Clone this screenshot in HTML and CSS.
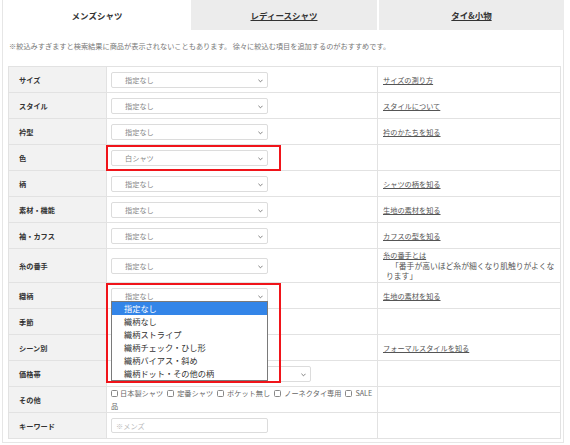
FILE: index.html
```html
<!DOCTYPE html>
<html lang="ja">
<head>
<meta charset="utf-8">
<link rel="stylesheet" href="styles.css">
</head>
<body>
<div class="wrap">
  <div class="tabs">
    <div class="tab active">メンズシャツ</div>
    <div class="tab"><a>レディースシャツ</a></div>
    <div class="tab last"><a>タイ&amp;小物</a></div>
  </div>
  <div class="panel">
    <p class="note">※絞込みすぎますと検索結果に商品が表示されないこともあります。 徐々に絞込む項目を追加するのがおすすめです。</p>
    <table class="search">
      <tr>
        <th>サイズ</th>
        <td class="sel"><div class="cell"><div class="select">指定なし<svg class="chev" viewBox="0 0 6 4"><polyline points="0.5,0.5 3,3 5.5,0.5"/></svg></div></div></td>
        <td class="link"><a>サイズの測り方</a></td>
      </tr>
      <tr>
        <th>スタイル</th>
        <td class="sel"><div class="cell"><div class="select">指定なし<svg class="chev" viewBox="0 0 6 4"><polyline points="0.5,0.5 3,3 5.5,0.5"/></svg></div></div></td>
        <td class="link"><a>スタイルについて</a></td>
      </tr>
      <tr>
        <th>衿型</th>
        <td class="sel"><div class="cell"><div class="select">指定なし<svg class="chev" viewBox="0 0 6 4"><polyline points="0.5,0.5 3,3 5.5,0.5"/></svg></div></div></td>
        <td class="link"><a>衿のかたちを知る</a></td>
      </tr>
      <tr>
        <th>色</th>
        <td class="sel"><div class="cell"><div class="select">白シャツ<svg class="chev" viewBox="0 0 6 4"><polyline points="0.5,0.5 3,3 5.5,0.5"/></svg></div><div class="mark mark-one"></div></div></td>
        <td class="link"></td>
      </tr>
      <tr>
        <th>柄</th>
        <td class="sel"><div class="cell"><div class="select">指定なし<svg class="chev" viewBox="0 0 6 4"><polyline points="0.5,0.5 3,3 5.5,0.5"/></svg></div></div></td>
        <td class="link"><a>シャツの柄を知る</a></td>
      </tr>
      <tr>
        <th>素材・機能</th>
        <td class="sel"><div class="cell"><div class="select">指定なし<svg class="chev" viewBox="0 0 6 4"><polyline points="0.5,0.5 3,3 5.5,0.5"/></svg></div></div></td>
        <td class="link"><a>生地の素材を知る</a></td>
      </tr>
      <tr>
        <th>袖・カフス</th>
        <td class="sel"><div class="cell"><div class="select">指定なし<svg class="chev" viewBox="0 0 6 4"><polyline points="0.5,0.5 3,3 5.5,0.5"/></svg></div></div></td>
        <td class="link"><a>カフスの型を知る</a></td>
      </tr>
      <tr class="tall">
        <th>糸の番手</th>
        <td class="sel"><div class="cell"><div class="select">指定なし<svg class="chev" viewBox="0 0 6 4"><polyline points="0.5,0.5 3,3 5.5,0.5"/></svg></div></div></td>
        <td class="link multi"><a class="head">糸の番手とは</a><span class="explain">「番手が高いほど糸が細くなり肌触りがよくな</span><span class="explain tail">ります」</span></td>
      </tr>
      <tr>
        <th>織柄</th>
        <td class="sel"><div class="cell">
          <div class="drop">
            <div class="select">指定なし<svg class="chev" viewBox="0 0 6 4"><polyline points="0.5,0.5 3,3 5.5,0.5"/></svg></div>
            <ul class="options">
              <li class="hl">指定なし</li>
              <li>織柄なし</li>
              <li>織柄ストライプ</li>
              <li>織柄チェック・ひし形</li>
              <li>織柄バイアス・斜め</li>
              <li>織柄ドット・その他の柄</li>
            </ul>
          </div>
          <div class="mark mark-two"></div>
        </div></td>
        <td class="link"><a>生地の素材を知る</a></td>
      </tr>
      <tr>
        <th>季節</th>
        <td class="sel"><div class="cell"><div class="select">指定なし<svg class="chev" viewBox="0 0 6 4"><polyline points="0.5,0.5 3,3 5.5,0.5"/></svg></div></div></td>
        <td class="link"></td>
      </tr>
      <tr>
        <th>シーン別</th>
        <td class="sel"><div class="cell"><div class="select">指定なし<svg class="chev" viewBox="0 0 6 4"><polyline points="0.5,0.5 3,3 5.5,0.5"/></svg></div></div></td>
        <td class="link"><a>フォーマルスタイルを知る</a></td>
      </tr>
      <tr>
        <th>価格帯</th>
        <td class="sel"><div class="cell"><div class="select wide">指定なし<svg class="chev" viewBox="0 0 6 4"><polyline points="0.5,0.5 3,3 5.5,0.5"/></svg></div></div></td>
        <td class="link"></td>
      </tr>
      <tr>
        <th>その他</th>
        <td class="sel"><div class="cell checks">
          <div class="line"><span class="cb first"></span>日本製シャツ<span class="cb"></span>定番シャツ<span class="cb"></span>ポケット無し<span class="cb"></span>ノーネクタイ専用<span class="cb"></span>SALE</div>
          <div class="line">品</div>
        </div></td>
        <td class="link"></td>
      </tr>
      <tr>
        <th>キーワード</th>
        <td class="sel"><div class="cell"><div class="input">※メンズ</div></div></td>
        <td class="link"></td>
      </tr>
    </table>
  </div>
</div>
</body>
</html>
```
FILE: styles.css
```css
* { box-sizing: border-box; }
html, body { margin: 0; padding: 0; background: #fff; }
body {
  font-family: "Noto Sans CJK JP", "Noto Sans", sans-serif;
  color: #333;
  width: 570px;
  height: 445px;
  overflow: hidden;
}
.wrap {
  margin-left: 2px;
  width: 562px;
}
.tabs {
  display: flex;
  height: 30px;
}
.tab {
  display: flex;
  align-items: center;
  justify-content: center;
  height: 30px;
  font-size: 8.5px;
  font-weight: bold;
  color: #333;
  background: #ececec;
  width: 186px;
}
.tab a { text-decoration: underline; color: #333; }
.tab.active {
  background: #fff;
  border-left: 1px solid #e6e6e6;
  width: 189px;
}
.tab.last { margin-left: 2px; width: 185px; }
.panel {
  border: 1px solid #e6e6e6;
  border-top: none;
  padding: 0 2px 3px 5px;
}
.note {
  margin: 0;
  padding: 10px 0 0 1px;
  height: 36px;
  font-size: 7.2px;
  line-height: 12px;
  color: #777;
}
.search {
  border-collapse: collapse;
  width: 553px;
  table-layout: fixed;
  border: 1px solid #dedede;
}
.search th, .search td {
  border: 1px solid #e2e2e2;
  height: 26px;
  padding: 0;
  vertical-align: middle;
}
.search th {
  width: 98px;
  background: #f2f2f2;
  text-align: left;
  padding-left: 10px;
  font-size: 7.2px;
  font-weight: bold;
  color: #333;
}
.search td.sel { width: 271px; }
.search tr.tall th, .search tr.tall td { height: 34px; }
.cell {
  position: relative;
  display: flex;
  align-items: center;
  padding: 0 4px;
  height: 24px;
}
.select {
  position: relative;
  display: flex;
  align-items: center;
  width: 157px;
  height: 16px;
  padding-left: 13px;
  border: 1px solid #dcdcdc;
  border-radius: 2px;
  background: #fff;
  font-size: 7.2px;
  color: #888;
}
.select.wide { width: 200px; }
.chev {
  position: absolute;
  right: 4px;
  top: 6px;
  width: 5px;
  height: 4px;
  fill: none;
  stroke: #666;
  stroke-width: 1;
}
.drop { position: relative; }
.options {
  position: absolute;
  z-index: 10;
  left: 0;
  top: 13px;
  width: 157px;
  margin: 0;
  padding: 0;
  list-style: none;
  background: #fff;
  border: 1px solid #7a7a7a;
}
.options li {
  height: 13.1px;
  line-height: 13.1px;
  padding-left: 12px;
  font-size: 8.2px;
  color: #333;
  white-space: nowrap;
}
.options li.hl {
  background: #3385e8;
  color: #fff;
}
.mark {
  position: absolute;
  z-index: 11;
  left: -1px;
  top: -1px;
  width: 175px;
  border: 2px solid #f0141a;
  pointer-events: none;
}
.mark-one { height: 26px; }
.mark-two { height: 100px; }
.checks {
  flex-direction: column;
  align-items: flex-start;
  justify-content: center;
  font-size: 7.2px;
  line-height: 13px;
  color: #666;
}
.checks .line { white-space: nowrap; }
.cb {
  display: inline-block;
  width: 7px;
  height: 7px;
  border: 1px solid #888;
  border-radius: 1.5px;
  vertical-align: -1px;
  margin: 0 3px 0 4px;
}
.cb.first { margin-left: 0; margin-right: 2px; }
.input {
  display: flex;
  align-items: center;
  width: 157px;
  height: 15px;
  padding-left: 4px;
  border: 1px solid #dcdcdc;
  border-radius: 2px;
  font-size: 7.2px;
  color: #bbb;
}
.search td.link {
  padding: 0 3px 0 5px;
  font-size: 7.2px;
  color: #555;
}
.link a { color: #555; text-decoration: underline; }
.link.multi { line-height: 10.5px; }
.link .head { display: block; }
.explain {
  display: block;
  height: 10px;
  line-height: 10px;
  padding-left: 8px;
  font-size: 7.8px;
  white-space: nowrap;
  color: #555;
}
.explain.tail { padding-left: 3px; }
```
